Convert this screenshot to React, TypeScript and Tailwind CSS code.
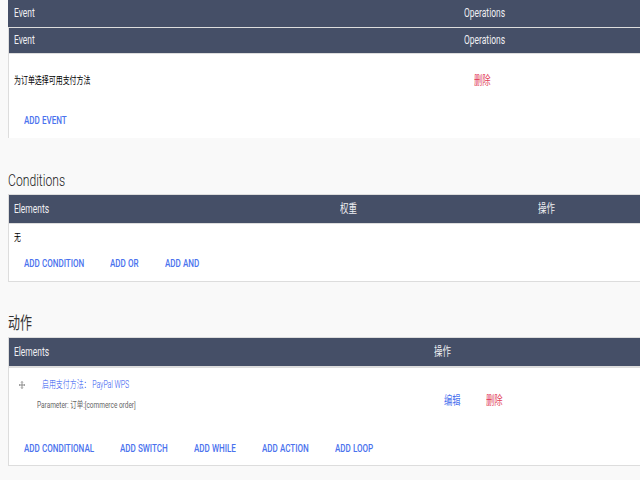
import type { ReactNode } from "react";

type LabelProps = { box: string; look: string; children: ReactNode };

// Condensed label: the box keeps the visual width while the text is narrowed.
function Label({ box, look, children }: LabelProps) {
  return (
    <span className={`block shrink-0 ${box}`}>
      <span className={`block w-max origin-left whitespace-pre ${look}`}>{children}</span>
    </span>
  );
}

const head = "text-[12px] leading-4 scale-x-[0.705] text-[#f0f0f3]";
const action = "text-[10.5px] leading-4 font-medium scale-x-[0.768] text-[#4a72ee]";
const title = "text-[17px] leading-6";

export default function App() {
  return (
    <main className="h-[480px] w-[640px] overflow-hidden bg-[#f9f9f9] pl-2 font-['Roboto','Noto_Sans_CJK_SC',sans-serif]">
      <section className="h-[138px] bg-white">
        <header className="flex h-[27px] bg-[#454f67] pt-[5px] pl-[5.5px]">
          <Label box="w-[450px]" look={head}>Event</Label>
          <Label box="w-[60px]" look={head}>Operations</Label>
        </header>
        <div className="h-[111px] border-t border-l border-[#ddd]">
          <header className="flex h-[26px] border-b border-[#ddd] bg-[#454f67] pt-[4px] pl-[4.5px]">
            <Label box="w-[450px]" look={head}>Event</Label>
            <Label box="w-[60px]" look={head}>Operations</Label>
          </header>
          <div className="flex pt-[19px] pl-[4.5px]">
            <Label box="w-[460px]" look="text-[10px] leading-4 scale-x-[0.695] text-black">为订单选择可用支付方法</Label>
            <Label box="w-[40px]" look="text-[12px] leading-4 scale-x-[0.69] text-[#e23c58]">删除</Label>
          </div>
          <div className="flex pt-[24px] pl-[14.5px]">
            <Label box="w-[60px]" look={action}>ADD EVENT</Label>
          </div>
        </div>
      </section>

      <section className="pt-[30px]">
        <h2 className="h-[26px]">
          <Label box="w-[70px]" look={`${title} font-light scale-x-[0.715] text-[#222]`}>Conditions</Label>
        </h2>
        <div className="h-[88px] border-y border-l border-[#ddd] bg-white">
          <header className="flex h-[29px] border-b border-[#ddd] bg-[#454f67] pt-[6px] pl-[4.5px]">
            <Label box="w-[326px]" look={head}>Elements</Label>
            <Label box="w-[198px]" look={head}>权重</Label>
            <Label box="w-[40px]" look={head}>操作</Label>
          </header>
          <div className="flex pt-[6px] pl-[4.5px]">
            <Label box="w-[20px]" look="text-[10px] leading-4 scale-x-[0.695] text-black">无</Label>
          </div>
          <div className="flex pt-[10px] pl-[14.5px]">
            <Label box="w-[86px]" look={action}>ADD CONDITION</Label>
            <Label box="w-[55.5px]" look={action}>ADD OR</Label>
            <Label box="w-[60px]" look={action}>ADD AND</Label>
          </div>
        </div>
      </section>

      <section className="pt-[29px]">
        <h2 className="h-[26px]">
          <Label box="w-[70px]" look={`${title} scale-x-[0.705] text-[#333]`}>动作</Label>
        </h2>
        <div className="h-[129px] border-y border-l border-[#ddd] bg-white">
          <header className="flex h-[30px] border-b-2 border-[#ddd] bg-[#454f67] pt-[6px] pl-[4.5px]">
            <Label box="w-[420.5px]" look={head}>Elements</Label>
            <Label box="w-[40px]" look={head}>操作</Label>
          </header>
          <div className="flex h-[63px] pl-[10px]">
            <svg className="mt-[13px] h-[8px] w-[6px] shrink-0" viewBox="0 0 6 8" fill="none" stroke="#777" strokeWidth="0.8">
              <path d="M3 .5v7M.2 4h5.6" />
              <path d="M2 1.6 3 .5l1 1.1M2 6.4l1 1.1 1-1.1M1 3 .2 4 1 5M5 3l.8 1L5 5" strokeWidth="0.6" />
            </svg>
            <div className="w-[409px] shrink-0 pt-[9px]">
              <div className="pl-[17px]">
                <Label box="w-[100px]" look="text-[10px] leading-4 font-light scale-x-[0.693] text-[#1f50f0]">启用支付方法： PayPal WPS</Label>
              </div>
              <div className="pt-[4px] pl-[11.5px]">
                <Label box="w-[110px]" look="text-[9px] leading-4 scale-x-[0.72] text-[#666]">Parameter: 订单:[commerce order]</Label>
              </div>
            </div>
            <div className="flex pt-[25px] pl-[9.5px]">
              <Label box="w-[42.5px]" look="text-[12px] leading-4 scale-x-[0.69] text-[#4a72ee]">编辑</Label>
              <Label box="w-[40px]" look="text-[12px] leading-4 scale-x-[0.69] text-[#e23c58]">删除</Label>
            </div>
          </div>
          <div className="flex pt-[10px] pl-[14.5px]">
            <Label box="w-[96px]" look={action}>ADD CONDITIONAL</Label>
            <Label box="w-[74px]" look={action}>ADD SWITCH</Label>
            <Label box="w-[68px]" look={action}>ADD WHILE</Label>
            <Label box="w-[73px]" look={action}>ADD ACTION</Label>
            <Label box="w-[60px]" look={action}>ADD LOOP</Label>
          </div>
        </div>
      </section>
    </main>
  );
}
